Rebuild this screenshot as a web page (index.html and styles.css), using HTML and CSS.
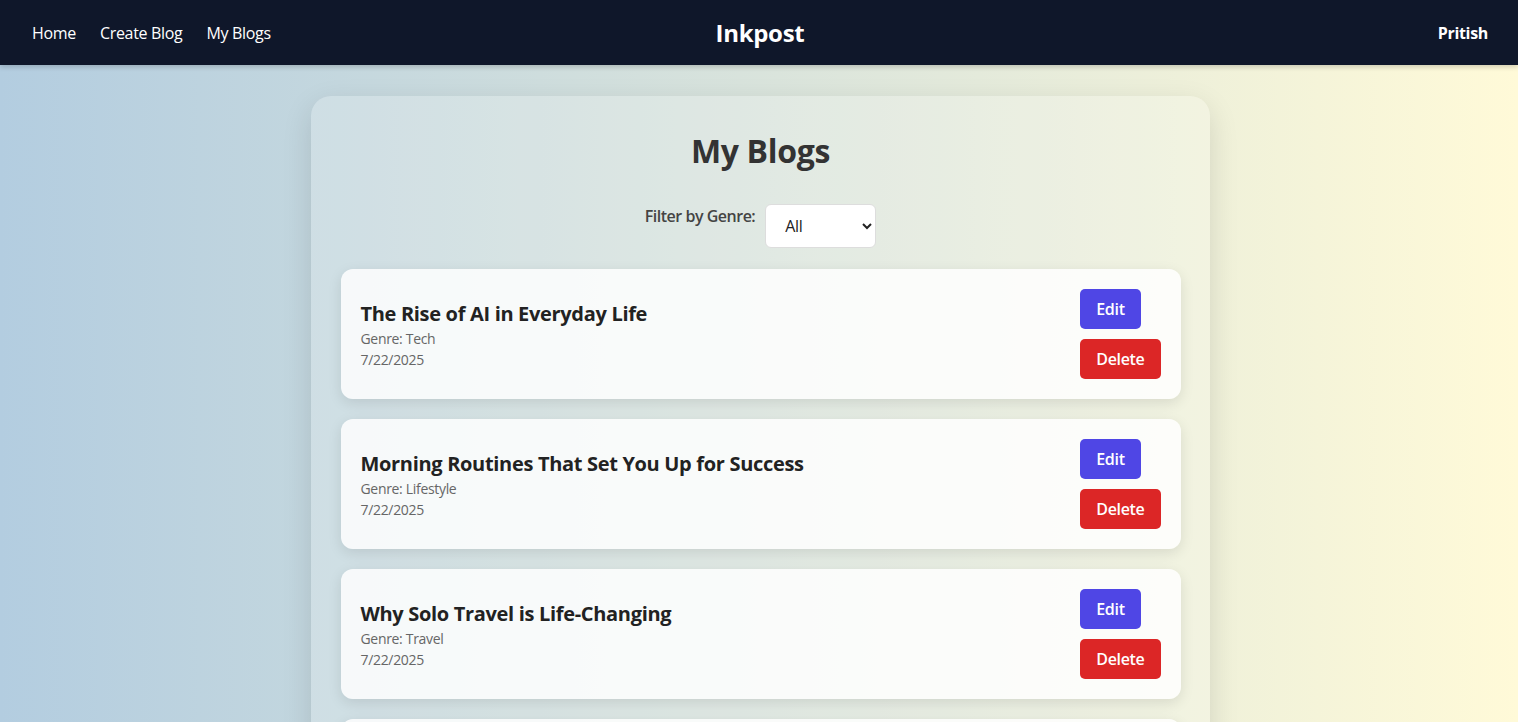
FILE: index.html
```html
<!DOCTYPE html>
<html lang="en">
<head>
<meta charset="utf-8">
<title>Inkpost - My Blogs</title>
<link rel="stylesheet" href="styles.css">
</head>
<body>
<nav class="navbar">
  <div class="nav-links">
    <a href="#" class="nav-link">Home</a>
    <a href="#" class="nav-link">Create Blog</a>
    <a href="#" class="nav-link">My Blogs</a>
  </div>
  <div class="brand">Inkpost</div>
  <div class="nav-user">Pritish</div>
</nav>
<main class="page">
  <section class="panel">
    <h2 class="panel-title">My Blogs</h2>
    <div class="filter">
      <label class="filter-label" for="genre">Filter by Genre:</label>
      <select id="genre" class="filter-select">
        <option>All</option>
        <option>Tech</option>
        <option>Lifestyle</option>
        <option>Travel</option>
      </select>
    </div>
    <div class="blog-list">
      <article class="blog-card">
        <div class="blog-info">
          <h3 class="blog-title">The Rise of AI in Everyday Life</h3>
          <p class="blog-meta">Genre: Tech</p>
          <p class="blog-meta">7/22/2025</p>
        </div>
        <div class="blog-actions">
          <button class="btn btn-edit">Edit</button>
          <button class="btn btn-delete">Delete</button>
        </div>
      </article>
      <article class="blog-card">
        <div class="blog-info">
          <h3 class="blog-title">Morning Routines That Set You Up for Success</h3>
          <p class="blog-meta">Genre: Lifestyle</p>
          <p class="blog-meta">7/22/2025</p>
        </div>
        <div class="blog-actions">
          <button class="btn btn-edit">Edit</button>
          <button class="btn btn-delete">Delete</button>
        </div>
      </article>
      <article class="blog-card">
        <div class="blog-info">
          <h3 class="blog-title">Why Solo Travel is Life-Changing</h3>
          <p class="blog-meta">Genre: Travel</p>
          <p class="blog-meta">7/22/2025</p>
        </div>
        <div class="blog-actions">
          <button class="btn btn-edit">Edit</button>
          <button class="btn btn-delete">Delete</button>
        </div>
      </article>
      <article class="blog-card">
        <div class="blog-info">
          <h3 class="blog-title">Budget-Friendly Healthy Meals</h3>
          <p class="blog-meta">Genre: Food</p>
          <p class="blog-meta">7/22/2025</p>
        </div>
        <div class="blog-actions">
          <button class="btn btn-edit">Edit</button>
          <button class="btn btn-delete">Delete</button>
        </div>
      </article>
    </div>
  </section>
</main>
</body>
</html>
```
FILE: styles.css
```css
* { box-sizing: border-box; }
html, body { margin: 0; padding: 0; }
body {
  font-family: "Open Sans", "Noto Sans", sans-serif;
  letter-spacing: -0.02em;
  min-height: 100vh;
  background: linear-gradient(to right, #b3cde0, #fffad8);
  color: #333;
}
.navbar {
  height: 65px;
  background: #0f172a;
  display: grid;
  grid-template-columns: 1fr auto 1fr;
  align-items: center;
  padding: 0 30px 0 32px;
  box-shadow: 0 2px 5px rgba(0,0,0,0.18);
}
.nav-links { display: flex; gap: 24px; }
.nav-link { color: #fff; text-decoration: none; font-size: 16px; }
.brand { color: #fff; font-size: 24px; font-weight: 700; }
.nav-user { color: #fff; font-weight: 700; font-size: 16px; justify-self: end; }
.page { display: flex; justify-content: center; padding: 31px 0 0 2px; }
.panel {
  width: 899px;
  padding: 30px 29px 40px 30px;
  border-radius: 20px;
  background: rgba(255,255,255,0.2);
  box-shadow: 0 10px 30px rgba(0,0,0,0.12);
}
.panel-title {
  margin: 5px 0 0;
  text-align: center;
  font-size: 32px;
  line-height: 40px;
  font-weight: 700;
  color: #333;
}
.filter {
  display: flex;
  justify-content: center;
  align-items: flex-start;
  gap: 10px;
  margin-top: 33px;
}
.filter-label { font-size: 16px; font-weight: 600; letter-spacing: -0.03em; color: #444; padding-top: 1px; }
.filter-select {
  width: 111px;
  height: 44px;
  padding: 0 14px 0 15px;
  font-family: inherit;
  letter-spacing: inherit;
  font-size: 16px;
  color: #222;
  background: #fff;
  border: 1px solid #ddd;
  border-radius: 6px;
}
.blog-list { display: flex; flex-direction: column; gap: 20px; margin-top: 21px; }
.blog-card {
  display: flex;
  align-items: center;
  justify-content: space-between;
  padding: 20px;
  border-radius: 12px;
  background: rgba(255,255,255,0.82);
  box-shadow: 0 4px 14px rgba(0,0,0,0.1);
}
.blog-info { padding-top: 1px; }
.blog-title { margin: 0; font-size: 20px; font-weight: 700; color: #222; line-height: 28px; }
.blog-meta { margin: 0; font-size: 14px; color: #666; line-height: 21px; }
.blog-actions { display: flex; flex-direction: column; align-items: flex-start; gap: 10px; }
.btn {
  height: 40px;
  padding: 0 16px;
  border: none;
  border-radius: 5px;
  color: #fff;
  font-family: inherit;
  letter-spacing: inherit;
  font-size: 16px;
  font-weight: 600;
}
.btn-edit { background: #4f46e5; }
.btn-delete { background: #dc2626; }
```
